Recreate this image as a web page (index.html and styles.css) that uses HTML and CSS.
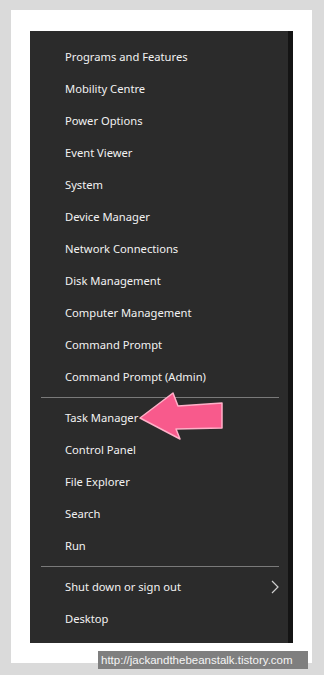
FILE: index.html
```html
<!DOCTYPE html>
<html lang="en">
<head>
    <meta charset="UTF-8">
    <meta name="viewport" content="width=device-width, initial-scale=1.0">
    <title>Win + X Menu</title>
    <link rel="stylesheet" href="styles.css">
</head>
<body>
    <div class="frame">
        <div class="menu">
            <ul class="group">
                <li>Programs and Features</li>
                <li>Mobility Centre</li>
                <li>Power Options</li>
                <li>Event Viewer</li>
                <li>System</li>
                <li>Device Manager</li>
                <li>Network Connections</li>
                <li>Disk Management</li>
                <li>Computer Management</li>
                <li>Command Prompt</li>
                <li>Command Prompt (Admin)</li>
            </ul>
            <hr class="sep">
            <ul class="group">
                <li class="pointed">Task Manager
                    <!-- pink arrow pointing at Task Manager -->
                    <svg class="arrow" width="90" height="54" viewBox="0 0 90 54">
                        <polygon points="2,28 35,3 40,16 84,13 84,38 38,39 42,49"
                                 fill="#f85a8c" stroke="#ffb0c8" stroke-width="1.5" stroke-linejoin="round"/>
                    </svg>
                </li>
                <li>Control Panel</li>
                <li>File Explorer</li>
                <li>Search</li>
                <li>Run</li>
            </ul>
            <hr class="sep">
            <ul class="group">
                <li class="sub">Shut down or sign out
                    <svg class="chevron" width="8" height="14" viewBox="0 0 8 14">
                        <polyline points="1,1 7,7 1,13" fill="none" stroke="#d0d0d0" stroke-width="1.2"/>
                    </svg>
                </li>
                <li>Desktop</li>
            </ul>
        </div>
    </div>
    <div class="watermark">http://jackandthebeanstalk.tistory.com</div>
</body>
</html>
```

FILE: styles.css
```css
body {
    margin: 0;
    padding: 10px 12px 12px 11px;
    background-color: #dadada;
    font-family: "Noto Sans", "Open Sans", sans-serif;
    position: relative;
}
.frame {
    background: white;
    height: 653px;
    padding: 21px 19px 0 19px;
    box-sizing: border-box;
}
.menu {
    background-color: #2b2b2b;
    border-right: 5px solid #141414;
    height: 612px;
    padding-top: 10px;
    box-sizing: border-box;
}
.group {
    list-style: none;
    margin: 0;
    padding: 0;
}
.group li {
    position: relative;
    height: 32px;
    line-height: 32px;
    padding-left: 35px;
    color: #f2f2f2;
    font-size: 11.2px;
}
.sep {
    border: none;
    border-top: 1px solid #7a7a7a;
    margin: 4px 9px 4px 11px;
    height: 0;
}
.arrow {
    position: absolute;
    left: 108px;
    top: -12px;
}
.chevron {
    position: absolute;
    right: 9px;
    top: 9px;
}
.watermark {
    position: absolute;
    left: 98px;
    top: 651px;
    width: 210px;
    height: 18px;
    overflow: hidden;
    white-space: nowrap;
    background-color: #7f7f7f;
    color: #f4f4f4;
    font-family: "Liberation Sans", sans-serif;
    font-size: 11.5px;
    line-height: 18px;
    padding-left: 3px;
    box-sizing: border-box;
}
```
